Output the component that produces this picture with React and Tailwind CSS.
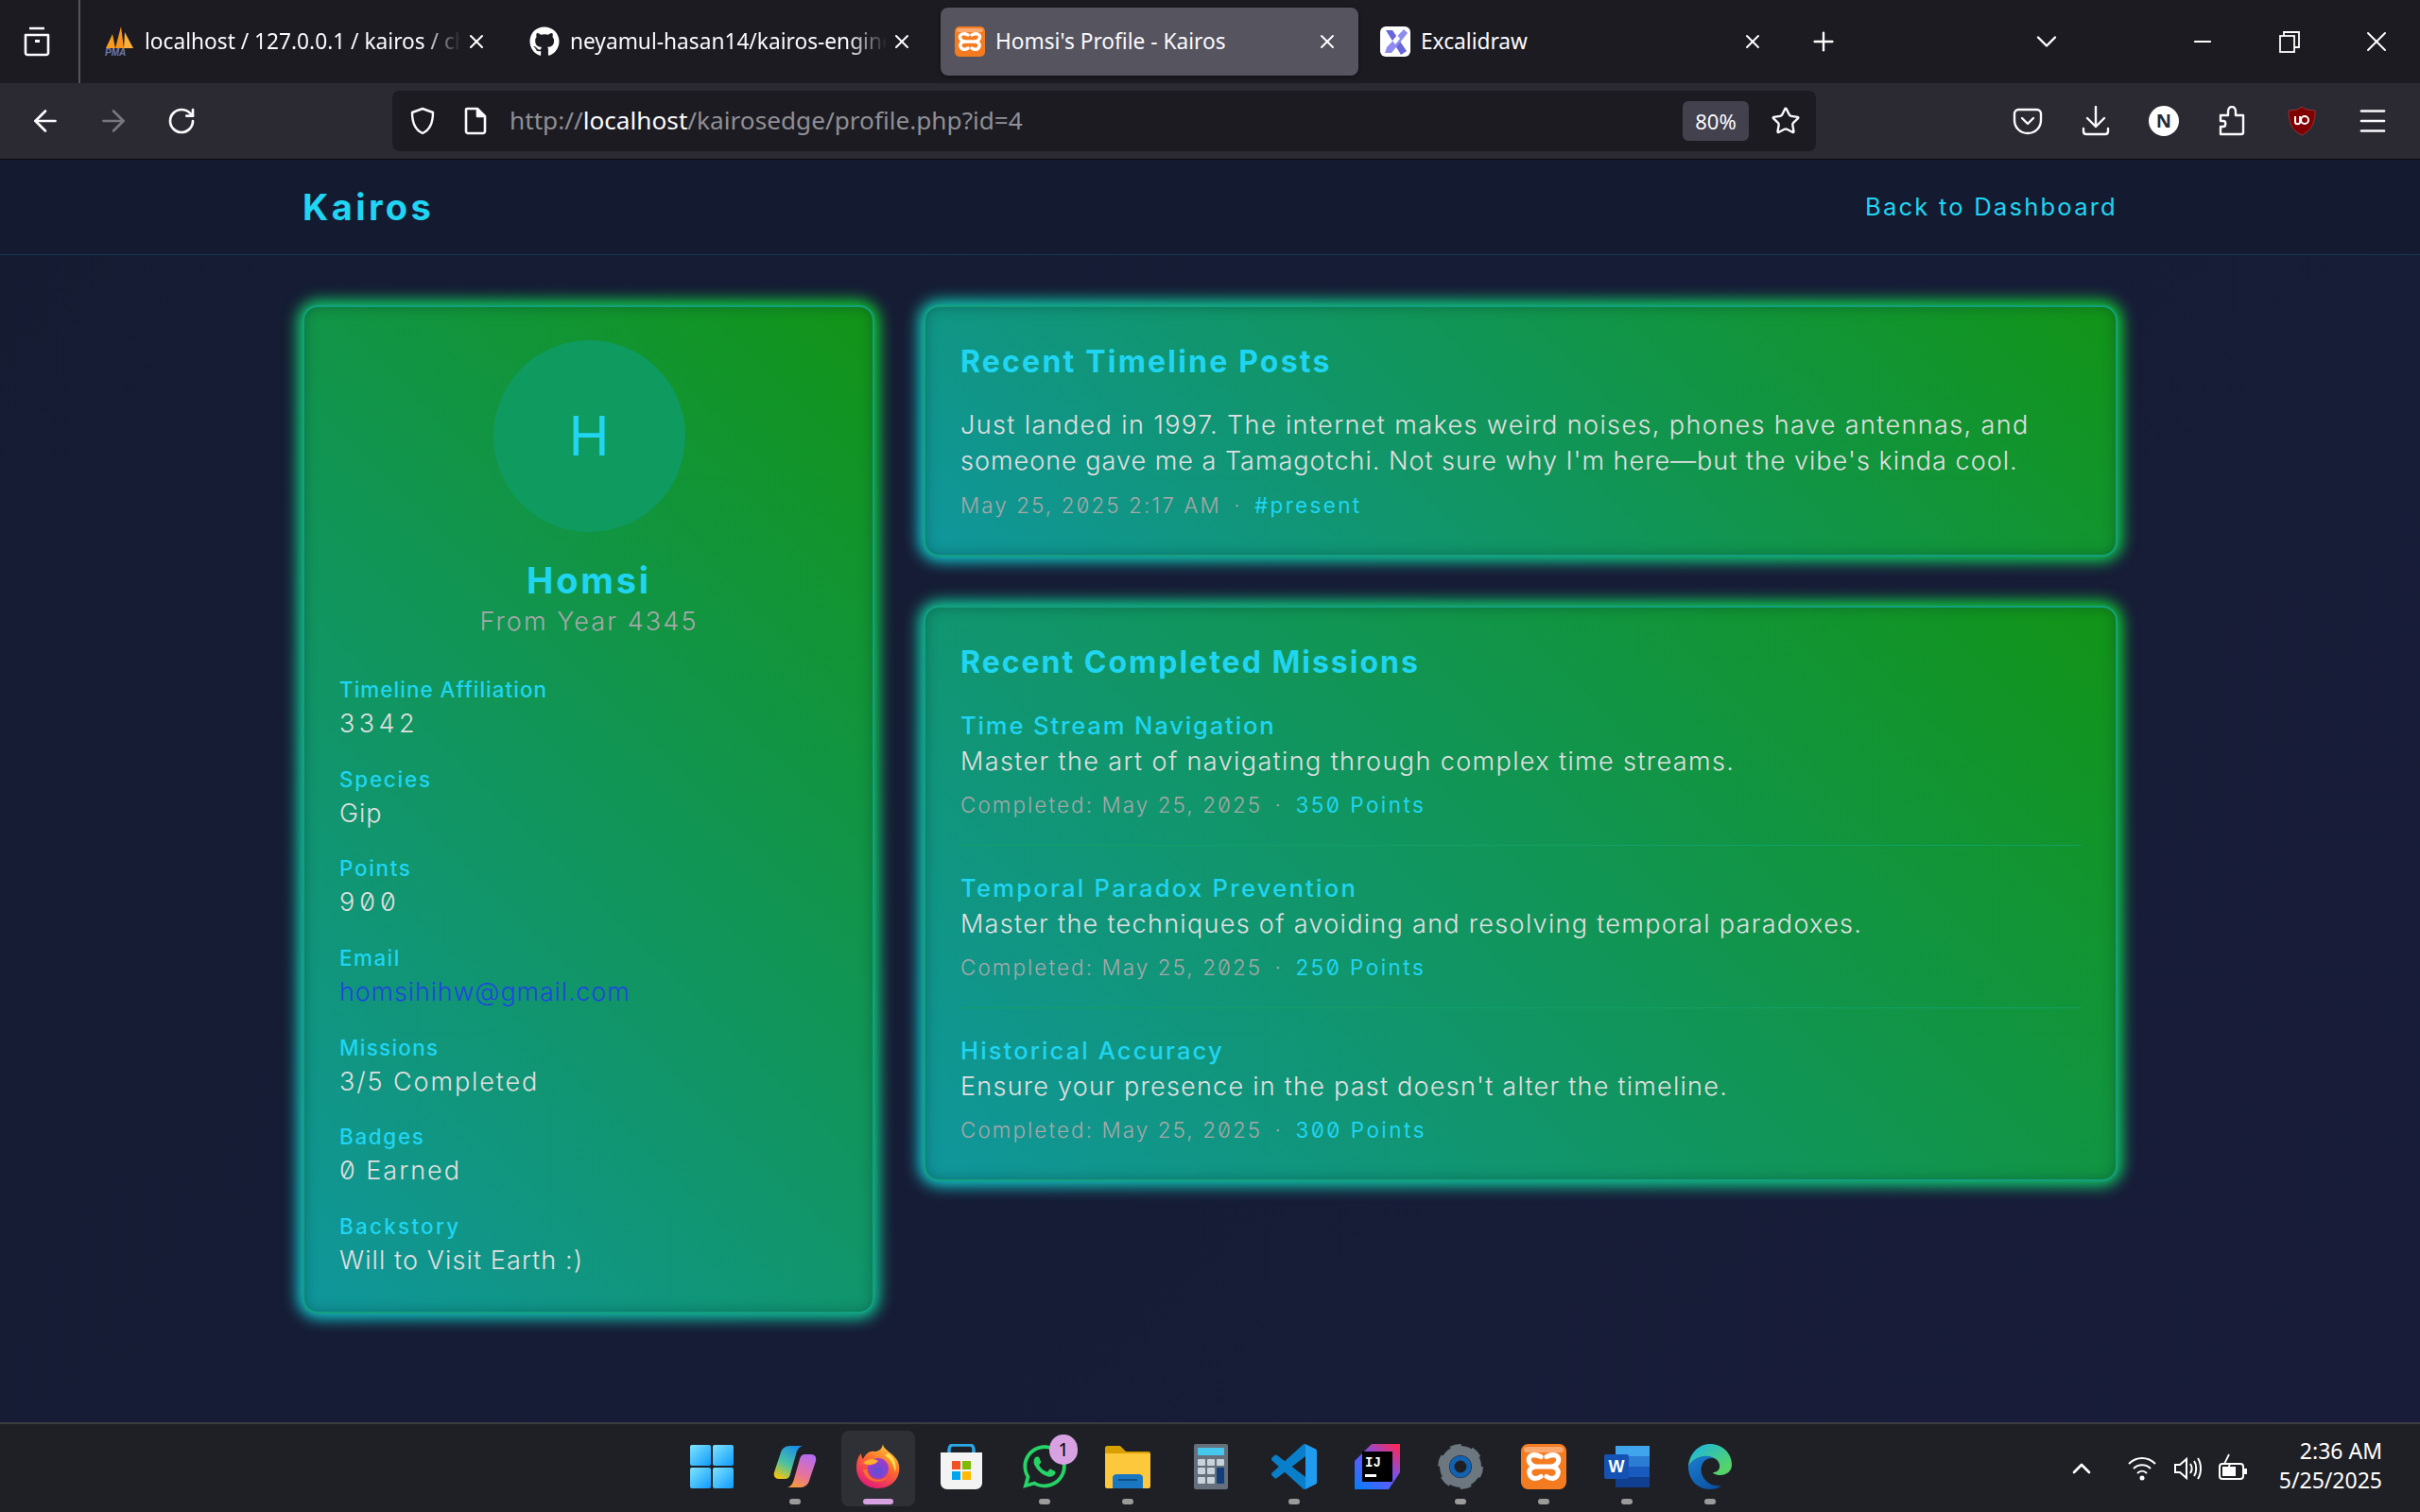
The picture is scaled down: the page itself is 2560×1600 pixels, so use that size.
import React from "react";
import { FaGithub, FaWhatsapp } from "react-icons/fa";
import { ArrowLeft, ArrowRight, RotateCw, Star, Plus, X, ChevronDown, ChevronUp, Minus, Menu } from "lucide-react";

const tabs = [
  { id: 1, title: "localhost / 127.0.0.1 / kairos / ch", icon: <PmaIcon />, fade: true },
  { id: 2, title: "neyamul-hasan14/kairos-engine", icon: <FaGithub className="w-8 h-8 text-white" />, fade: true },
  { id: 3, title: "Homsi's Profile - Kairos", icon: <XamppIcon size={32} />, active: true },
  { id: 4, title: "Excalidraw", icon: <ExcalidrawIcon /> },
];

const stats = [
  { label: "Timeline Affiliation", value: "3342", lt: "tracking-[1.05px]", vt: "tracking-[4.4px]" },
  { label: "Species", value: "Gip", lt: "tracking-[1.8px]", vt: "tracking-[0.9px]" },
  { label: "Points", value: "900", lt: "tracking-[1.7px]", vt: "tracking-[5px]" },
  { label: "Email", value: "homsihihw@gmail.com", link: true, lt: "tracking-[1.5px]", vt: "tracking-[0.84px]" },
  { label: "Missions", value: "3/5 Completed", lt: "tracking-[1.3px]", vt: "tracking-[1.9px]" },
  { label: "Badges", value: "0 Earned", lt: "tracking-[1.7px]", vt: "tracking-[2px]" },
  { label: "Backstory", value: "Will to Visit Earth :)", lt: "tracking-[2.3px]", vt: "tracking-[1.1px]" },
];

const missions = [
  { title: "Time Stream Navigation", desc: "Master the art of navigating through complex time streams.", points: "350 Points", tt: "tracking-[1.85px]", dt: "tracking-[1.39px]" },
  { title: "Temporal Paradox Prevention", desc: "Master the techniques of avoiding and resolving temporal paradoxes.", points: "250 Points", tt: "tracking-[2.25px]", dt: "tracking-[1.31px]" },
  { title: "Historical Accuracy", desc: "Ensure your presence in the past doesn't alter the timeline.", points: "300 Points", tt: "tracking-[2.1px]", dt: "tracking-[1.25px]" },
];

function PmaIcon() {
  return (
    <svg viewBox="0 0 32 32" className="w-8 h-8">
      <path d="M2 23 L9 8 L12 23Z" fill="#f89c1c" />
      <path d="M12 23 L18 0 L21 23Z" fill="#f6931e" />
      <path d="M21 23 L22 6 L31 23Z" fill="#fbb03b" />
      <text x="1" y="31" fontSize="10" fontWeight="700" fontStyle="italic" fill="#6c78af" fontFamily="Liberation Sans">PMA</text>
    </svg>
  );
}

function XamppIcon({ size }) {
  return (
    <svg viewBox="0 0 32 32" width={size} height={size}>
      <rect x="0" y="0" width="32" height="32" rx="5" fill="#f47b20" />
      <rect x="2" y="2" width="28" height="4" rx="2" fill="#f9a870" />
      <path d="M14 9 C8 6 4 9 6 13 C7 15 9 16 11 16 C8 16 5 18 6 21 C7 25 11 25 14 23 M18 9 C24 6 28 9 26 13 C25 15 23 16 21 16 C24 16 27 18 26 21 C25 25 21 25 18 23 M11 16 L21 16" stroke="#fff" strokeWidth="3.4" fill="none" strokeLinecap="round" />
    </svg>
  );
}

function ExcalidrawIcon() {
  return (
    <svg viewBox="0 0 32 32" className="w-8 h-8">
      <rect width="32" height="32" rx="6" fill="#fff" />
      <path d="M6 4 L13 4 L28 26 L22 30Z" fill="#6965db" />
      <path d="M25 3 L29 7 L12 28 L5 28 L7 22Z" fill="#8f8cf0" />
      <path d="M18 9 L13 15 L16 19 L21 13Z" fill="#fff" />
    </svg>
  );
}

function TitleTab({ tab }) {
  return (
    <div className={`w-[442px] h-[72px] flex items-center pl-[15px] pr-[21px] rounded-lg ${tab.active ? "bg-[#55545f] shadow-[0_1px_4px_rgba(0,0,0,0.5)]" : ""}`}>
      <span className="w-8 h-8 shrink-0">{tab.icon}</span>
      <span className={`ml-[11px] flex-1 min-w-0 overflow-hidden whitespace-nowrap text-[22.7px] text-[#fbfbfe] ${tab.fade ? "[mask-image:linear-gradient(to_right,black_88%,transparent)]" : ""}`}>
        {tab.title}
      </span>
      <X className="ml-1 w-6 h-6 shrink-0 text-white" strokeWidth={2} />
    </div>
  );
}

function ShieldIcon() {
  return (
    <svg viewBox="0 0 32 32" className="w-8 h-8" fill="none" stroke="#fbfbfe" strokeWidth="2.4">
      <path d="M16 3 L27 7 C27 17 25 25 16 29 C7 25 5 17 5 7Z" strokeLinejoin="round" />
    </svg>
  );
}

function PageIcon() {
  return (
    <svg viewBox="0 0 32 32" className="w-8 h-8" fill="none" stroke="#fbfbfe" strokeWidth="2.6" strokeLinejoin="round">
      <path d="M7 3 H18 L26 11 V27 C26 28 25 29 24 29 H8 C7 29 6 28 6 27 V4 C6 3.500 6.500 3 7 3Z" />
      <path d="M18 3 V11 H26" fill="#fbfbfe" />
    </svg>
  );
}

function PocketIcon() {
  return (
    <svg viewBox="0 0 32 32" className="w-8 h-8" fill="none" stroke="#fbfbfe" strokeWidth="2.4" strokeLinecap="round" strokeLinejoin="round">
      <path d="M6 4 H26 C28 4 30 6 30 8 V15 C30 23 24 29 16 29 C8 29 2 23 2 15 V8 C2 6 4 4 6 4Z" />
      <path d="M10 13 L16 19 L22 13" />
    </svg>
  );
}

function DownloadIcon() {
  return (
    <svg viewBox="0 0 32 32" className="w-8 h-8" fill="none" stroke="#fbfbfe" strokeWidth="2.4" strokeLinecap="round" strokeLinejoin="round">
      <path d="M16 1 V22 M7 13 L16 22 L25 13" />
      <path d="M3 24 V27 C3 28.500 4 30 6 30 H26 C28 30 29 28.500 29 27 V24" />
    </svg>
  );
}

function PuzzleIcon() {
  return (
    <svg viewBox="0 0 32 32" className="w-8 h-8" fill="none" stroke="#fbfbfe" strokeWidth="2.4" strokeLinejoin="round">
      <path d="M4 30 H26 C27 30 28 29 28 28 V10 H20 V6 C20 3 18 1 16 1 C14 1 12 3 12 6 V10 H4 V16 H7 C10 16 10 22 7 22 H4Z" />
    </svg>
  );
}

function UblockIcon() {
  return (
    <svg viewBox="0 0 32 32" className="w-8 h-8">
      <path d="M16 1 L21 4 L30 5 C30 17 27 26 16 31 C5 26 2 17 2 5 L11 4Z" fill="#800000" stroke="#a44" strokeWidth="0.7" />
      <path d="M9 11 V17 C9 20 14 20 14 17 V11" stroke="#fff" strokeWidth="2" fill="none" />
      <circle cx="19" cy="15" r="4" stroke="#fff" strokeWidth="2" fill="none" />
    </svg>
  );
}

function TabsIcon() {
  return (
    <svg viewBox="0 0 32 32" className="w-8 h-8" fill="none" stroke="#fbfbfe" strokeWidth="2.6" strokeLinejoin="round">
      <path d="M8 2 H24 M4 9 H28 V28 C28 29 27 30 26 30 H6 C5 30 4 29 4 28Z" />
      <rect x="14" y="14" width="5" height="3" fill="#fbfbfe" stroke="none" />
    </svg>
  );
}

function WinIcon() {
  return (
    <svg viewBox="0 0 48 48" className="w-12 h-12">
      <defs>
        <linearGradient id="winGrad" x1="0" y1="0" x2="1" y2="1">
          <stop offset="0" stopColor="#7fe4ff" />
          <stop offset="1" stopColor="#0e9bfb" />
        </linearGradient>
      </defs>
      <rect x="1" y="1" width="22" height="22" rx="2" fill="url(#winGrad)" />
      <rect x="25" y="1" width="22" height="22" rx="2" fill="url(#winGrad)" />
      <rect x="1" y="25" width="22" height="22" rx="2" fill="url(#winGrad)" />
      <rect x="25" y="25" width="22" height="22" rx="2" fill="url(#winGrad)" />
    </svg>
  );
}

function CopilotIcon() {
  return (
    <svg viewBox="0 0 48 48" className="w-12 h-12">
      <defs>
        <linearGradient id="copA" x1="0.7" y1="0" x2="0.2" y2="1">
          <stop offset="0" stopColor="#1a8fe8" />
          <stop offset="0.55" stopColor="#4cc2a0" />
          <stop offset="1" stopColor="#f5c60e" />
        </linearGradient>
        <linearGradient id="copB" x1="0.7" y1="0" x2="0.3" y2="1">
          <stop offset="0" stopColor="#b66bf0" />
          <stop offset="0.6" stopColor="#e8739a" />
          <stop offset="1" stopColor="#f59a3c" />
        </linearGradient>
      </defs>
      <path d="M18 2 H32 C28 3 26 7 25 11 L19 32 C18 36 16 37 13 37 H7 C3 37 1 34 2 30 L9 9 C10 5 14 2 18 2Z" fill="url(#copA)" />
      <path d="M30 46 H16 C20 45 22 41 23 37 L29 16 C30 12 32 11 35 11 H41 C45 11 47 14 46 18 L39 39 C38 43 34 46 30 46Z" fill="url(#copB)" />
    </svg>
  );
}

function FirefoxIcon() {
  return (
    <svg viewBox="0 0 48 48" className="w-12 h-12">
      <defs>
        <linearGradient id="ffA" x1="0.8" y1="0" x2="0.3" y2="1">
          <stop offset="0" stopColor="#ffd43b" />
          <stop offset="0.45" stopColor="#ff6b2c" />
          <stop offset="1" stopColor="#e3197a" />
        </linearGradient>
        <radialGradient id="ffB" cx="0.5" cy="0.6" r="0.55">
          <stop offset="0" stopColor="#5b4fd6" />
          <stop offset="1" stopColor="#a03bc8" />
        </radialGradient>
      </defs>
      <path d="M29 0 C29 6 41 10 45 19 C50 33 40 47 24 47 C10 47 1 37 1 25 C1 18 3 13 6 10 C6 13 7 15 8 16 C11 10 15 7 20 8 C24 8 28 6 29 0Z" fill="url(#ffA)" />
      <path d="M35 10 C41 14 44 22 42 30 C41 24 38 16 31 12Z" fill="#ffe04d" />
      <circle cx="24" cy="26" r="11" fill="url(#ffB)" />
      <path d="M8 20 C13 15 20 15 24 18 C21 22 14 24 8 20Z" fill="#ffb02e" />
      <path d="M12 27 C13 37 24 41 34 35 C26 44 10 40 8 27Z" fill="#ff8a1e" opacity="0.7" />
    </svg>
  );
}

function StoreIcon() {
  return (
    <svg viewBox="0 0 48 48" className="w-12 h-12">
      <path d="M11 11 V6 C11 3 13 1 15 1 H33 C35 1 37 3 37 6 V11" stroke="#29a8e8" strokeWidth="3.5" fill="none" />
      <path d="M2 9 H46 V41 C46 45 43 48 39 48 H9 C5 48 2 45 2 41Z" fill="#f3f3f3" />
      <rect x="14" y="18" width="9" height="9" fill="#f25022" />
      <rect x="25" y="18" width="9" height="9" fill="#7fba00" />
      <rect x="14" y="29" width="9" height="9" fill="#00a4ef" />
      <rect x="25" y="29" width="9" height="9" fill="#ffb900" />
    </svg>
  );
}

function FolderIcon() {
  return (
    <svg viewBox="0 0 48 48" className="w-12 h-12">
      <path d="M0 4 C0 3 1 2 2 2 H16 L22 8 H46 C47 8 48 9 48 10 V18 H0Z" fill="#d9a000" />
      <path d="M0 10 H48 V45 C48 46 47 47 46 47 H2 C1 47 0 46 0 45Z" fill="#fdc83c" />
      <path d="M8 47 V36 C8 33 10 32 13 32 H35 C38 32 40 33 40 36 V47Z" fill="#1a78c2" />
      <rect x="14" y="37" width="20" height="2" fill="#0f4f86" />
    </svg>
  );
}

function CalcIcon() {
  return (
    <svg viewBox="0 0 48 48" className="w-12 h-12">
      <rect x="6" y="0" width="36" height="48" rx="2" fill="#66707c" />
      <rect x="10" y="4" width="28" height="8" rx="1" fill="#45c8ee" />
      {[16, 25, 35].map((y) =>
        [10, 20].map((x) => <rect key={`${x}-${y}`} x={x} y={y} width="8" height="7" rx="1" fill="#c8d2da" />)
      )}
      <rect x="30" y="16" width="8" height="7" rx="1" fill="#c8d2da" />
      <rect x="30" y="25" width="8" height="17" rx="1" fill="#123f7c" />
    </svg>
  );
}

function VsCodeIcon() {
  return (
    <svg viewBox="0 0 100 100" className="w-12 h-12">
      <path fill="#0a7fc9" fillRule="evenodd" d="M70.9119 99.3171C72.4869 99.9307 74.2828 99.8914 75.8725 99.1264L96.4608 89.2197C98.6242 88.1787 100 85.9892 100 83.5872V16.4133C100 14.0113 98.6243 11.8218 96.4609 10.7808L75.8725 0.873756C73.7862 -0.130129 71.3446 0.11576 69.5135 1.44695C69.2519 1.63711 69.0025 1.84943 68.769 2.08341L29.3551 38.0415L12.1872 25.0096C10.589 23.7965 8.35363 23.8959 6.86933 25.2461L1.36303 30.2549C-0.452552 31.9064 -0.454633 34.7627 1.35853 36.417L16.2471 50.0001L1.35853 63.5832C-0.454633 65.2374 -0.452552 68.0938 1.36303 69.7453L6.86933 74.7541C8.35363 76.1043 10.589 76.2037 12.1872 74.9905L29.3551 61.9587L68.769 97.9167C69.3925 98.5406 70.1246 99.0104 70.9119 99.3171ZM75.0152 27.2989L45.1091 50.0001L75.0152 72.7012V27.2989Z" />
      <path fill="#1f9cf0" d="M75 0.5 L96.5 10.8 C98.6 11.8 100 14 100 16.4 V83.6 C100 86 98.6 88.2 96.5 89.2 L75 99.5Z" />
    </svg>
  );
}

function IdeaIcon() {
  return (
    <svg viewBox="0 0 48 48" className="w-12 h-12">
      <defs>
        <linearGradient id="ijGrad" x1="0.9" y1="0" x2="0.1" y2="1">
          <stop offset="0" stopColor="#fe2857" />
          <stop offset="0.5" stopColor="#6b57ff" />
          <stop offset="1" stopColor="#087cfa" />
        </linearGradient>
      </defs>
      <path d="M18 0 H48 V30 L36 48 H0 V18Z" fill="url(#ijGrad)" />
      <rect x="8" y="8" width="32" height="32" fill="#000" />
      <text x="11" y="24" fontSize="14" fontWeight="700" fill="#fff" fontFamily="Liberation Mono">IJ</text>
      <rect x="11" y="32" width="12" height="3" fill="#fff" />
    </svg>
  );
}

function GearIcon() {
  return (
    <svg viewBox="0 0 48 48" className="w-12 h-12">
      <circle cx="24" cy="24" r="17" fill="none" stroke="#6d7780" strokeWidth="10" />
      <circle cx="24" cy="24" r="21" fill="none" stroke="#6d7780" strokeWidth="6" strokeDasharray="11 11" />
      <circle cx="24" cy="24" r="9" fill="#1f2025" stroke="#1262b0" strokeWidth="5" />
    </svg>
  );
}

function WordIcon() {
  return (
    <svg viewBox="0 0 48 48" className="w-12 h-12">
      <rect x="12" y="2" width="36" height="11" fill="#41a5ee" />
      <rect x="12" y="13" width="36" height="11" fill="#2b7cd3" />
      <rect x="12" y="24" width="36" height="11" fill="#185abd" />
      <rect x="12" y="35" width="36" height="11" fill="#103f91" />
      <rect x="0" y="11" width="26" height="26" rx="2" fill="#1453b4" />
      <text x="13" y="30" textAnchor="middle" fontSize="18" fontWeight="700" fill="#fff" fontFamily="Liberation Sans">W</text>
    </svg>
  );
}

function EdgeIcon() {
  return (
    <svg viewBox="0 0 48 48" className="w-12 h-12">
      <defs>
        <linearGradient id="edgeA" x1="0.2" y1="0" x2="0.9" y2="0.7">
          <stop offset="0" stopColor="#1fb6da" />
          <stop offset="1" stopColor="#55d46a" />
        </linearGradient>
        <linearGradient id="edgeB" x1="0" y1="0" x2="0.8" y2="1">
          <stop offset="0" stopColor="#1c7fd0" />
          <stop offset="1" stopColor="#0b4fa0" />
        </linearGradient>
      </defs>
      <path d="M24 0 C37 0 47 10 47 22 C47 29 41 33 35 33 C30 33 27 31 27 30 C36 30 36 20 30 16 C20 10 6 14 1 24 C2 10 12 0 24 0Z" fill="url(#edgeA)" />
      <path d="M1 24 C6 14 20 10 28 15 C18 14 13 22 15 31 C17 39 26 46 36 44 C32 47 28 48 24 48 C10 48 1 37 1 24Z" fill="url(#edgeB)" />
    </svg>
  );
}

function DockItem({ icon, dot, active }) {
  return (
    <div className="relative w-[88px] h-20 flex items-center justify-center">
      {active && <span className="absolute inset-y-0 inset-x-[5px] rounded-lg bg-[#2e3036]" />}
      <span className="relative -mt-[4px]">{icon}</span>
      {dot && <span className="absolute bottom-[2px] w-3 h-[6px] rounded-full bg-[#9b9b9b]" />}
      {active && <span className="absolute bottom-[2px] w-8 h-[6px] rounded-full bg-[#d8a2e2]" />}
    </div>
  );
}

function GlowCard({ children }) {
  return (
    <div className="relative">
      <div className="absolute -inset-[5px] rounded-[22px] blur-[8px] bg-[linear-gradient(45deg,#10d0d8,#10d030)]" />
      <div className="relative rounded-2xl border-2 border-[#14a080] bg-[linear-gradient(45deg,#10969c,#129417)] shadow-[inset_0_0_14px_rgba(0,40,40,0.35)] pl-[37px] pr-[36px] py-[35px]">
        {children}
      </div>
    </div>
  );
}

export default function App() {
  return (
    <div className="w-full h-screen flex flex-col overflow-hidden font-['Noto_Sans',sans-serif] bg-[#1c1b22]">
      {/* window title bar */}
      <div className="h-[88px] shrink-0 flex items-center bg-[#1c1b22]">
        <div className="w-[85px] h-full border-r-2 border-[#55545f] flex items-center justify-center pr-[5px]">
          <TabsIcon />
        </div>
        <div className="ml-[10px] flex gap-2 items-center">
          {tabs.map((tab) => (
            <TitleTab key={tab.id} tab={tab} />
          ))}
        </div>
        <div className="w-[84px] flex justify-center">
          <Plus className="w-8 h-8 text-white" strokeWidth={1.8} />
        </div>
        <div className="ml-[158px] w-[72px] flex justify-center">
          <ChevronDown className="w-9 h-9 text-white" strokeWidth={1.6} />
        </div>
        <div className="ml-auto flex items-center">
          <div className="w-[92px] flex justify-center"><Minus className="w-7 h-7 text-white" strokeWidth={1.6} /></div>
          <div className="w-[92px] flex justify-center">
            <svg viewBox="0 0 24 24" className="w-6 h-6" fill="none" stroke="#fff" strokeWidth="1.8">
              <rect x="2" y="6" width="15" height="17" />
              <path d="M6 6 V2 H22 V18 H17" />
            </svg>
          </div>
          <div className="w-[92px] flex justify-center"><X className="w-9 h-9 text-white" strokeWidth={1.3} /></div>
        </div>
      </div>

      {/* nav toolbar */}
      <div className="h-[81px] shrink-0 flex items-center pl-3 pr-[13px] bg-[#2b2a33] border-b border-[#0c0c10]">
        <div className="w-[72px] flex justify-center"><ArrowLeft className="w-9 h-9 text-[#fbfbfe]" strokeWidth={1.8} /></div>
        <div className="w-[72px] flex justify-center"><ArrowRight className="w-9 h-9 text-[#77767d]" strokeWidth={1.8} /></div>
        <div className="w-[72px] flex justify-center"><RotateCw className="w-8 h-8 text-[#fbfbfe]" strokeWidth={2} /></div>
        <div className="ml-[187px] w-[1506px] h-16 rounded-lg bg-[#1c1b22] flex items-center pl-4 pr-[16px]">
          <ShieldIcon />
          <span className="ml-6"><PageIcon /></span>
          <span className="ml-[20px] text-[26.2px] text-[#8f8f94] whitespace-nowrap">
            http://<span className="text-[#fbfbfe]">localhost</span>/kairosedge/profile.php?id=4
          </span>
          <span className="ml-auto w-[70px] h-[42px] rounded-md bg-[#42414d] flex items-center justify-center text-[22px] text-[#fbfbfe]">80%</span>
          <Star className="ml-[23px] w-8 h-8 text-[#fbfbfe]" strokeWidth={1.8} />
        </div>
        <div className="ml-auto flex items-center">
          <div className="w-[72px] flex justify-center"><PocketIcon /></div>
          <div className="w-[72px] flex justify-center"><DownloadIcon /></div>
          <div className="w-[72px] flex justify-center">
            <span className="w-8 h-8 rounded-full bg-white flex items-center justify-center text-[20px] font-bold text-[#2b2a33]">N</span>
          </div>
          <div className="w-[72px] flex justify-center"><PuzzleIcon /></div>
          <div className="w-[75px] flex justify-center"><UblockIcon /></div>
          <div className="w-[75px] flex justify-center"><Menu className="w-9 h-9 text-[#fbfbfe]" strokeWidth={1.8} /></div>
        </div>
      </div>

      {/* page */}
      <div className="flex-1 min-h-0 bg-[linear-gradient(135deg,#151c32,#181c39)] font-['Inter',sans-serif] slashed-zero">
        <div className="h-[101px] border-b border-[#173a4c] bg-[#141a30]">
          <div className="w-[1920px] h-full mx-auto flex items-center justify-between">
            <span className="text-[38px] font-bold tracking-[3.4px] text-[#1fd5f2]">Kairos</span>
            <span className="text-[25.6px] font-normal tracking-[2.2px] text-[#1fd5f2]">Back to Dashboard</span>
          </div>
        </div>

        <div className="w-[1920px] mx-auto pt-[53px] grid grid-cols-[605px_1fr] gap-[52px] items-start">
          <GlowCard>
            <div className="flex flex-col items-center">
              <div className="w-[203px] h-[203px] rounded-full bg-[#0f9a60] flex items-center justify-center text-[58px] font-normal text-[#1fd5f2]">H</div>
              <h2 className="mt-[28px] h-[46px] leading-[46px] text-[38px] font-bold tracking-[2.8px] text-[#1fd5f2]">Homsi</h2>
              <p className="mt-[2px] h-[38px] leading-[38px] text-[27px] font-light tracking-[2.1px] text-[#a8a8a8]">From Year 4345</p>
            </div>
            <div className="mt-[39px] flex flex-col gap-[25.7px]">
              {stats.map((s) => (
                <div key={s.label}>
                  <div className={`h-[28px] leading-[28px] text-[22.4px] font-medium text-[#1fd5f2] ${s.lt}`}>{s.label}</div>
                  <div className={`mt-[3px] h-[38px] leading-[38px] text-[27px] font-light ${s.vt} ${s.link ? "text-[#1f45e0]" : "text-[#e0e0e0]"}`}>{s.value}</div>
                </div>
              ))}
            </div>
          </GlowCard>

          <div className="flex flex-col gap-[52px]">
            <GlowCard>
              <h3 className="h-[46px] leading-[46px] text-[32px] font-bold tracking-[2.2px] text-[#1fd5f2]">Recent Timeline Posts</h3>
              <p className="mt-[25px] text-[27px] leading-[38.4px] font-light text-[#e0e0e0]">
                <span className="tracking-[1.39px]">Just landed in 1997. The internet makes weird noises, phones have antennas, and</span><br />
                <span className="tracking-[1px]">someone gave me a Tamagotchi. Not sure why I'm here—but the vibe's kinda cool.</span>
              </p>
              <div className="mt-[10px] h-[34px] leading-[34px] text-[22.4px] font-light tracking-[2.1px] text-[#a8a8a8]">
                May 25, 2025 2:17 AM <span className="mx-[5px]">·</span> <span className="text-[#1fd5f2] font-normal tracking-[2.4px]">#present</span>
              </div>
            </GlowCard>

            <GlowCard>
              <h3 className="h-[46px] leading-[46px] text-[32px] font-bold tracking-[2px] text-[#1fd5f2]">Recent Completed Missions</h3>
              <div className="mt-[25px]">
                {missions.map((m, i) => (
                  <div key={m.title} className={i < missions.length - 1 ? "pb-[25px] mb-[26px] border-b border-[#12a066]" : ""}>
                    <div className={`h-[38px] leading-[38px] text-[25.6px] font-medium text-[#1fd5f2] ${m.tt}`}>{m.title}</div>
                    <div className={`h-[38px] leading-[38px] text-[27px] font-light text-[#e0e0e0] ${m.dt}`}>{m.desc}</div>
                    <div className="mt-[10px] h-[34px] leading-[34px] text-[22.4px] font-light tracking-[2.1px] text-[#a8a8a8]">
                      Completed: May 25, 2025 <span className="mx-[5px]">·</span> <span className="text-[#1fd5f2] font-normal tracking-[2.5px]">{m.points}</span>
                    </div>
                  </div>
                ))}
              </div>
            </GlowCard>
          </div>
        </div>
      </div>

      {/* taskbar */}
      <div className="h-[95px] shrink-0 flex items-center bg-[#1f2025] border-t-2 border-[#3b3c40] relative">
        <div className="ml-[709px] flex items-center">
          <DockItem icon={<WinIcon />} />
          <DockItem icon={<CopilotIcon />} dot />
          <DockItem icon={<FirefoxIcon />} active />
          <DockItem icon={<StoreIcon />} />
          <div className="relative">
            <DockItem icon={<FaWhatsapp className="w-[52px] h-[52px] text-[#25d366]" />} dot />
            <span className="absolute top-[4px] right-[9px] w-[30px] h-[32px] rounded-full bg-[#d8a2e2] flex items-center justify-center text-[20px] text-black">1</span>
          </div>
          <DockItem icon={<FolderIcon />} dot />
          <DockItem icon={<CalcIcon />} />
          <DockItem icon={<VsCodeIcon />} dot />
          <DockItem icon={<IdeaIcon />} />
          <DockItem icon={<GearIcon />} dot />
          <DockItem icon={<XamppIcon size={48} />} dot />
          <DockItem icon={<WordIcon />} dot />
          <DockItem icon={<EdgeIcon />} dot />
        </div>
        <div className="ml-auto flex items-center pr-10">
          <ChevronUp className="w-8 h-8 text-white" strokeWidth={2} />
          <svg viewBox="0 0 32 32" className="ml-[32px] w-8 h-8" fill="none" stroke="#fff" strokeWidth="2">
            <path d="M2 11 C10 3 22 3 30 11 M7 16 C12 11 20 11 25 16 M11 21 C14 18 18 18 21 21" />
            <circle cx="16" cy="26" r="2.500" fill="#fff" stroke="none" />
          </svg>
          <svg viewBox="0 0 32 32" className="ml-[16px] w-8 h-8" fill="none" stroke="#fff" strokeWidth="2">
            <path d="M3 12 H8 L15 6 V26 L8 20 H3Z" />
            <path d="M19 11 C21 14 21 18 19 21 M23 8 C26 12 26 20 23 24 M27 5 C31 11 31 21 27 27" />
          </svg>
          <svg viewBox="0 0 32 32" className="ml-[16px] w-8 h-8" fill="none" stroke="#fff" strokeWidth="2">
            <rect x="2" y="11" width="25" height="16" rx="3" />
            <rect x="5" y="14" width="14" height="10" fill="#fff" stroke="none" />
            <rect x="28" y="16" width="3" height="6" fill="#fff" stroke="none" />
            <path d="M12 1 L7 11 H13 L10 19" strokeWidth="1.800" />
          </svg>
          <div className="ml-[14px] -mt-[6px] w-[128px] text-right text-[23px] leading-[31px] text-white">
            <div>2:36 AM</div>
            <div>5/25/2025</div>
          </div>
        </div>
      </div>
    </div>
  );
}
